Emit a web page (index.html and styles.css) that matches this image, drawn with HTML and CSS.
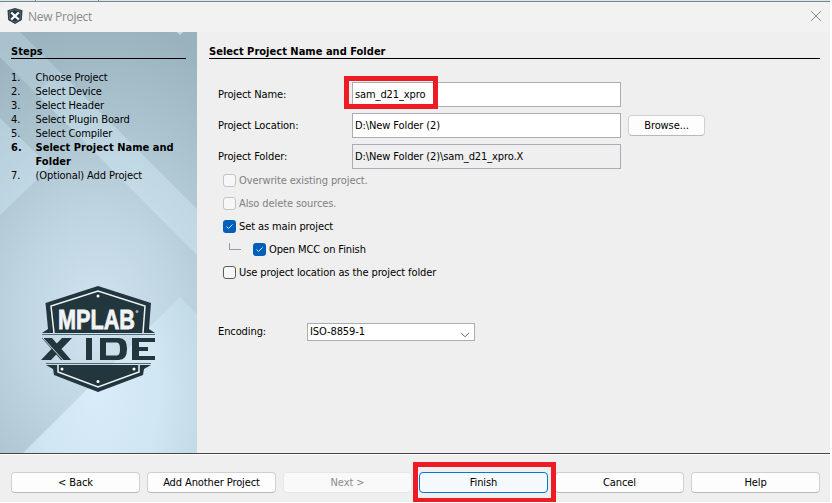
FILE: index.html
```html
<!DOCTYPE html>
<html lang="en">
<head>
<meta charset="utf-8">
<title>New Project</title>
<link rel="stylesheet" href="styles.css">
</head>
<body>
<div class="window">
  <div class="backdrop"><i></i><i></i></div>
  <header class="titlebar">
    <svg class="app-icon" width="16" height="16" viewBox="0 0 16 16"><path d="M8 0 15.500 2.200 14.800 12 8 16 1.200 12 .5 2.200Z" fill="#263a43"/><path d="M8 1.600 13.800 3.300 13.300 11 8 14.300 2.700 11 2.200 3.300Z" fill="none" stroke="#71858d" stroke-width=".6"/><path d="m4.200 4.500 7.600 7M11.800 4.500l-7.600 7" stroke="#fff" stroke-width="2.300"/></svg>
    <span class="title">New Project</span>
    <svg class="close" width="12" height="12" viewBox="0 0 12 12"><path d="m1 1 10 10M11 1 1 11" stroke="#888" fill="none"/></svg>
  </header>
  <main class="body">
    <aside class="sidebar">
      <svg class="scene" width="197" height="421" viewBox="0 32 197 421">
        <defs>
          <radialGradient id="glow" gradientUnits="userSpaceOnUse" cx="98" cy="320" r="300" gradientTransform="translate(98 0) scale(.75 1) translate(-98 0)"><stop offset="0" stop-color="#d0e4f1"/><stop offset=".35" stop-color="#bfd5e1"/><stop offset="1" stop-color="#98b2be"/></radialGradient>
          <radialGradient id="base" gradientUnits="userSpaceOnUse" cx="98" cy="390" r="125" gradientTransform="translate(0 390) scale(1 1.6) translate(0 -390)"><stop offset="0" stop-color="#d8ecf9"/><stop offset=".5" stop-color="#d0e6f2"/><stop offset="1" stop-color="#bdd6e2"/></radialGradient>
        </defs>
        <path d="M0 32H197V453H0Z" fill="url(#glow)"/>
        <path d="M20 32 197 209V255L0 57V32Z" fill="#d8eefb" fill-opacity=".38"/>
        <path d="M0 32H20L60 72 36 93 0 57Z" fill="#96b0bd" fill-opacity=".25"/>
        <path d="M0 118 50 167 0 215Z" fill="#d8eefb" fill-opacity=".35"/>
        <path d="M177 32H183L180 35Z" fill="#c5dbe4"/>
        <path d="M23 453 180 297 197 314V453Z" fill="url(#base)"/>
        <g fill="#22363e">
          <path d="M98 286 151 303 149 329 155 333H42L48 329 45.500 303Z"/>
          <path d="M46 365H151L144 369 143 375 98 392 54 375 53 369Z"/>
          <path d="M42 334.500H155M46 363.500H151" stroke="#526b77"/>
          <path d="M42 338H52L71 360H61ZM62 338H72L51 360H41ZM86 338H92V360H86ZM100 338H119Q127 338 127 349T119 360H100ZM132 338H155V342H139V347H148V351H139V356H155V360H132Z"/>
        </g>
        <path d="M106 342.500H117Q120 342.500 120 349T117 355.500H106Z" fill="#cce0ec"/>
        <path d="M54 333 51 306 98 291 145 306 143 333M58 365V372L98 387 139 372V365" fill="none" stroke="#eef4f6" stroke-width="1.500"/>
        <g fill="#fff"><circle cx="98" cy="296" r="1.500"/><circle cx="62" cy="369" r="1.500"/><circle cx="134" cy="369" r="1.500"/><circle cx="98" cy="381.500" r="1.500"/></g>
        <path d="m43 338 20 22" stroke="#cce0ec"/>
        <text class="brand" x="58" y="329" textLength="77" lengthAdjust="spacingAndGlyphs">MPLAB</text>
        <circle cx="137" cy="311.500" r="1.500" fill="#9eabb1"/>
      </svg>
      <div class="steps">
        <h2 class="heading">Steps</h2>
        <ol class="list">
          <li><span>1.</span><span>Choose Project</span></li>
          <li><span>2.</span><span>Select Device</span></li>
          <li><span>3.</span><span>Select Header</span></li>
          <li><span>4.</span><span>Select Plugin Board</span></li>
          <li><span>5.</span><span>Select Compiler</span></li>
          <li class="current"><span>6.</span><span>Select Project Name and<br>Folder</span></li>
          <li><span>7.</span><span>(Optional) Add Project</span></li>
        </ol>
      </div>
    </aside>
    <section class="panel">
      <h2 class="heading">Select Project Name and Folder</h2>
      <div class="fields">
        <label>Project Name:</label><div class="input marked">sam_d21_xpro</div><span></span>
        <label>Project Location:</label><div class="input">D:\New Folder (2)</div><button class="button">Browse...</button>
        <label>Project Folder:</label><div class="input readonly">D:\New Folder (2)\sam_d21_xpro.X</div><span></span>
      </div>
      <div class="checks">
        <div class="check off"><i class="box"></i><span>Overwrite existing project.</span></div>
        <div class="check off"><i class="box"></i><span>Also delete sources.</span></div>
        <div class="check"><i class="box on"><svg width="13" height="13" viewBox="0 0 13 13"><path d="m3.500 6.500 2 2 4-4"/></svg></i><span>Set as main project</span></div>
        <div class="check"><i class="branch"></i><i class="box on"><svg width="13" height="13" viewBox="0 0 13 13"><path d="m3.500 6.500 2 2 4-4"/></svg></i><span>Open MCC on Finish</span></div>
        <div class="check"><i class="box"></i><span>Use project location as the project folder</span></div>
      </div>
      <div class="encoding"><label>Encoding:</label><div class="select"><span>ISO-8859-1</span><svg width="10" height="6" viewBox="0 0 10 6"><path d="m1 .8 4 4 4-4" fill="none" stroke="#666"/></svg></div></div>
    </section>
  </main>
  <footer class="footer">
    <button class="button">&lt; Back</button>
    <button class="button">Add Another Project</button>
    <button class="button disabled">Next &gt;</button>
    <button class="button primary">Finish</button>
    <button class="button">Cancel</button>
    <button class="button">Help</button>
  </footer>
</div>
</body>
</html>
```
FILE: styles.css
```css
*, *::after { box-sizing: border-box; }
body { margin: 0; background: #fff; overflow: hidden; font: 11px/14px "DejaVu Sans Condensed", "DejaVu Sans", sans-serif; font-stretch: condensed; letter-spacing: -0.1px; color: #000; }
.window { width: 830px; height: 502px; background: #efefef; display: flex; flex-direction: column; }
.backdrop { height: 2px; background: #e0e4df; border-bottom: 1px solid #718995; display: flex; gap: 62px; padding-left: 35px; }
.backdrop i { width: 1px; height: 1px; background: #718995; }
.titlebar { height: 30px; background: #f2f2f2; display: flex; align-items: center; padding: 0 8px 2px 7px; border-radius: 6px 6px 0 0; }
.title { margin-left: 5px; font: 12px/16px "Open Sans", sans-serif; letter-spacing: -0.3px; color: #8b8b8b; flex: 1; padding-top: 2px; }
.body { height: 421px; display: flex; }
.sidebar { position: relative; width: 197px; }
.scene { position: absolute; inset: 0; }
.brand { font: bold 27px "Liberation Sans", sans-serif; letter-spacing: 0; fill: #f2f4f4; stroke: #f2f4f4; stroke-width: .8px; }
.steps { position: relative; padding: 12px 11px; }
.heading { margin: 0; height: 15px; font-size: 11px; line-height: 14px; padding-top: 1px; letter-spacing: 0.02px; border-bottom: 1px solid #000; white-space: nowrap; }
.list { list-style: none; margin: 12px 0 0; padding: 0; }
.list li { display: flex; white-space: nowrap; }
.list li span:first-child { width: 24px; }
.list li span:last-child { margin-left: .5px; }
.current { font-weight: bold; letter-spacing: 0.04px; }
.panel { width: 633px; padding: 12px 10px 0 12px; }
.fields { display: grid; grid-template-columns: 134px 269px 77px; grid-auto-rows: 25px; row-gap: 6px; align-items: center; margin: 23px 0 0 9px; }
.fields .button { margin-left: 7px; width: 77px; }
.input { position: relative; height: 25px; border: 1px solid #abadb3; background: #fff; padding: 5px 2px 3px; white-space: nowrap; }
.readonly { background: #efefef; }
.marked { z-index: 1; }
.marked::after { content: ""; position: absolute; left: -9px; top: -7px; width: 94px; height: 33px; border: 5px solid #ed1c24; }
.checks { margin: 0 0 0 14px; }
.check { display: flex; align-items: center; height: 23px; white-space: nowrap; }
.box { width: 13px; height: 13px; border: 1px solid #5c5c5c; border-radius: 3px; background: #f7f7f7; margin-right: 3px; }
.check span { padding-top: 1px; }
.off { color: #808080; }
.off .box { border-color: #c4c4c4; }
.box.on { background: #005fb8; border: 0; }
.box svg { display: block; fill: none; stroke: #d8edff; }
.branch { width: 12px; height: 7px; margin: -6px 12px 0 6px; border: solid #9299aa; border-width: 0 0 1px 1px; }
.encoding { display: flex; align-items: center; margin: 39px 0 0 9px; }
.encoding label { width: 89px; }
.select { width: 168px; height: 18px; display: flex; justify-content: space-between; align-items: center; border: 1px solid #abadb3; background: #fff; padding: 0 4px 0 2px; }
.select svg { margin-top: 5px; }
.footer { height: 49px; border-top: 1px solid #454545; box-shadow: inset 0 1px #fff; padding: 18px 0 0 11px; display: flex; gap: 7px; }
.button { width: 129px; height: 21px; padding: 0; border: 1px solid #d0d0d0; border-bottom-color: #b9b9b9; border-radius: 4px; background: #fdfdfd; color: #000; font: inherit; letter-spacing: inherit; text-align: center; }
.disabled { background: #f9f9f9; border-color: #e7e7e7; color: #8b8b8b; }
.primary { position: relative; border-color: #0078d4; background: #f5f9fd; }
.primary::after { content: ""; position: absolute; left: -7px; top: -11px; width: 143px; height: 41px; border: 5px solid #ed1c24; }
```
